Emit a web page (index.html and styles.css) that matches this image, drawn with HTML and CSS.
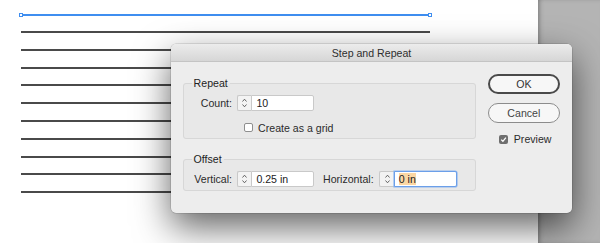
FILE: index.html
```html
<!DOCTYPE html>
<html lang="en">
<head>
  <meta charset="UTF-8">
  <title>Step and Repeat</title>
  <link rel="stylesheet" href="styles.css">
</head>
<body>
  <div class="workspace">
    <div class="page">
      <div class="guide">
        <span class="handle"></span>
        <span class="guide-line"></span>
        <span class="handle"></span>
      </div>
      <div class="rules">
        <div class="rule"></div>
        <div class="rule"></div>
        <div class="rule"></div>
        <div class="rule"></div>
        <div class="rule"></div>
        <div class="rule"></div>
        <div class="rule"></div>
        <div class="rule"></div>
        <div class="rule"></div>
        <div class="rule"></div>
      </div>
    </div>
    <div class="pasteboard"></div>

    <div class="dialog">
      <div class="titlebar">Step and Repeat</div>
      <div class="dialog-body">
        <div class="groups">
          <fieldset class="group group-repeat">
            <legend>Repeat</legend>
            <div class="field-row">
              <span class="field-label">Count:</span>
              <span class="stepper">
                <svg width="7" height="12" viewBox="0 0 7 12"><path d="M1.5 4.5 L3.5 2.2 L5.5 4.5 M1.5 7.5 L3.5 9.8 L5.5 7.5" fill="none" stroke="#555" stroke-width="0.9"/></svg>
              </span>
              <span class="field">10</span>
            </div>
            <div class="check-row grid-check">
              <span class="checkbox"></span>
              <span>Create as a grid</span>
            </div>
          </fieldset>

          <fieldset class="group group-offset">
            <legend>Offset</legend>
            <div class="field-row">
              <span class="field-label">Vertical:</span>
              <span class="stepper">
                <svg width="7" height="12" viewBox="0 0 7 12"><path d="M1.5 4.5 L3.5 2.2 L5.5 4.5 M1.5 7.5 L3.5 9.8 L5.5 7.5" fill="none" stroke="#555" stroke-width="0.9"/></svg>
              </span>
              <span class="field">0.25 in</span>
              <span class="field-label inline-label">Horizontal:</span>
              <span class="stepper">
                <svg width="7" height="12" viewBox="0 0 7 12"><path d="M1.5 4.5 L3.5 2.2 L5.5 4.5 M1.5 7.5 L3.5 9.8 L5.5 7.5" fill="none" stroke="#555" stroke-width="0.9"/></svg>
              </span>
              <span class="field field-wide focused"><span class="selected">0 in</span></span>
            </div>
          </fieldset>
        </div>

        <div class="actions">
          <div class="button default">OK</div>
          <div class="button">Cancel</div>
          <div class="check-row preview-check">
            <span class="checkbox checked">
              <svg width="9" height="9" viewBox="0 0 9 9"><path d="M2.2 4.6 L3.9 6.3 L6.9 2.6" fill="none" stroke="#fff" stroke-width="1.3"/></svg>
            </span>
            <span>Preview</span>
          </div>
        </div>
      </div>
    </div>
  </div>
</body>
</html>
```

FILE: styles.css
```css
html, body {
  margin: 0;
  padding: 0;
}
body {
  width: 600px;
  height: 243px;
  overflow: hidden;
  font-family: "Liberation Sans", Arial, sans-serif;
  font-size: 10.6px;
  color: #2b2b2b;
}
.workspace {
  position: relative;
  display: flex;
  height: 243px;
}
.page {
  width: 538px;
  background: #fff;
  padding-top: 12.5px;
  box-sizing: border-box;
}
.pasteboard {
  flex: 1;
  background: #b4b4b4;
  box-shadow: inset 3px 0 5px -2px rgba(0,0,0,0.35);
}
.guide {
  display: flex;
  align-items: center;
  margin-left: 18.7px;
  width: 413.6px;
  height: 5px;
}
.handle {
  width: 4.5px;
  height: 4.5px;
  box-sizing: border-box;
  border: 1px solid #3f8ef0;
  background: #fff;
}
.guide-line {
  flex: 1;
  height: 1.4px;
  background: #3f8ef0;
}
.rules {
  display: flex;
  flex-direction: column;
  gap: 15.8px;
  margin-top: 13.5px;
  margin-left: 20.7px;
  width: 409.3px;
}
.rule {
  height: 2px;
  background: #4a4a4a;
}

/* dialog */
.dialog {
  position: absolute;
  left: 171px;
  top: 44px;
  width: 401px;
  height: 169px;
  background: #ededed;
  border-radius: 5px;
  box-shadow: 0 14px 36px rgba(0,0,0,0.62), 0 0 0 0.5px rgba(0,0,0,0.2);
}
.titlebar {
  height: 17px;
  line-height: 18px;
  text-align: center;
  color: #2e2e2e;
  background: linear-gradient(#ececec, #d6d6d6);
  border-bottom: 1px solid #c4c4c4;
  border-radius: 5px 5px 0 0;
}
.dialog-body {
  display: flex;
  padding: 0 12px;
}
.groups {
  width: 293px;
  padding-top: 15.2px;
}
.group {
  margin: 0;
  min-width: 0;
  border: 1px solid #d7d7d7;
  border-radius: 3px;
  background: #e8e8e8;
}
.group legend {
  margin-left: 7.6px;
  padding: 0 2px;
  line-height: 13px;
  color: #222;
}
.group-repeat {
  padding: 5px 0 4px 0;
}
.group-offset {
  margin-top: 14px;
  padding: 4.8px 0 3px 0;
}
.field-row {
  display: flex;
  align-items: center;
  height: 16px;
}
.field-label {
  width: 48px;
  margin-right: 5px;
  text-align: right;
}
.inline-label {
  width: auto;
  margin-left: 9.3px;
  margin-right: 5.7px;
}
.stepper {
  display: flex;
  align-items: center;
  justify-content: center;
  width: 14.4px;
  height: 16px;
  box-sizing: border-box;
  border: 1px solid #c9c9c9;
  border-right: none;
  border-radius: 2px 0 0 2px;
  background: #f3f3f3;
}
.field {
  width: 62.3px;
  height: 16px;
  line-height: 14px;
  box-sizing: border-box;
  padding-left: 4px;
  border: 1px solid #c9c9c9;
  border-radius: 0 2px 2px 0;
  background: #fff;
  color: #222;
}
.field-wide {
  width: 63px;
}
.focused {
  border-color: #6b9fe9;
  box-shadow: 0 0 0 0.6px #8db5ef;
}
.selected {
  background: #fbd7a4;
}
.check-row {
  display: flex;
  align-items: center;
  height: 13px;
}
.grid-check {
  margin-top: 10.2px;
  padding-left: 59.6px;
}
.checkbox {
  display: flex;
  width: 9px;
  height: 9px;
  box-sizing: border-box;
  margin-right: 5.5px;
  border: 1px solid #8e8e8e;
  border-radius: 2px;
  background: #fff;
}
.checkbox.checked {
  border: none;
  background: #6e6e6e;
}
.actions {
  display: flex;
  flex-direction: column;
  width: 72.3px;
  margin-left: 11.7px;
  padding-top: 12px;
}
.button {
  height: 20px;
  line-height: 18px;
  box-sizing: border-box;
  text-align: center;
  border: 1px solid #8c8c8c;
  border-radius: 10px;
  background: #f7f7f7;
  color: #444;
}
.button + .button {
  margin-top: 8.7px;
}
.button.default {
  border: 2px solid #4a4a4a;
  line-height: 16px;
  color: #333;
}
.preview-check {
  margin-top: 10px;
  padding-left: 11.6px;
}
```
